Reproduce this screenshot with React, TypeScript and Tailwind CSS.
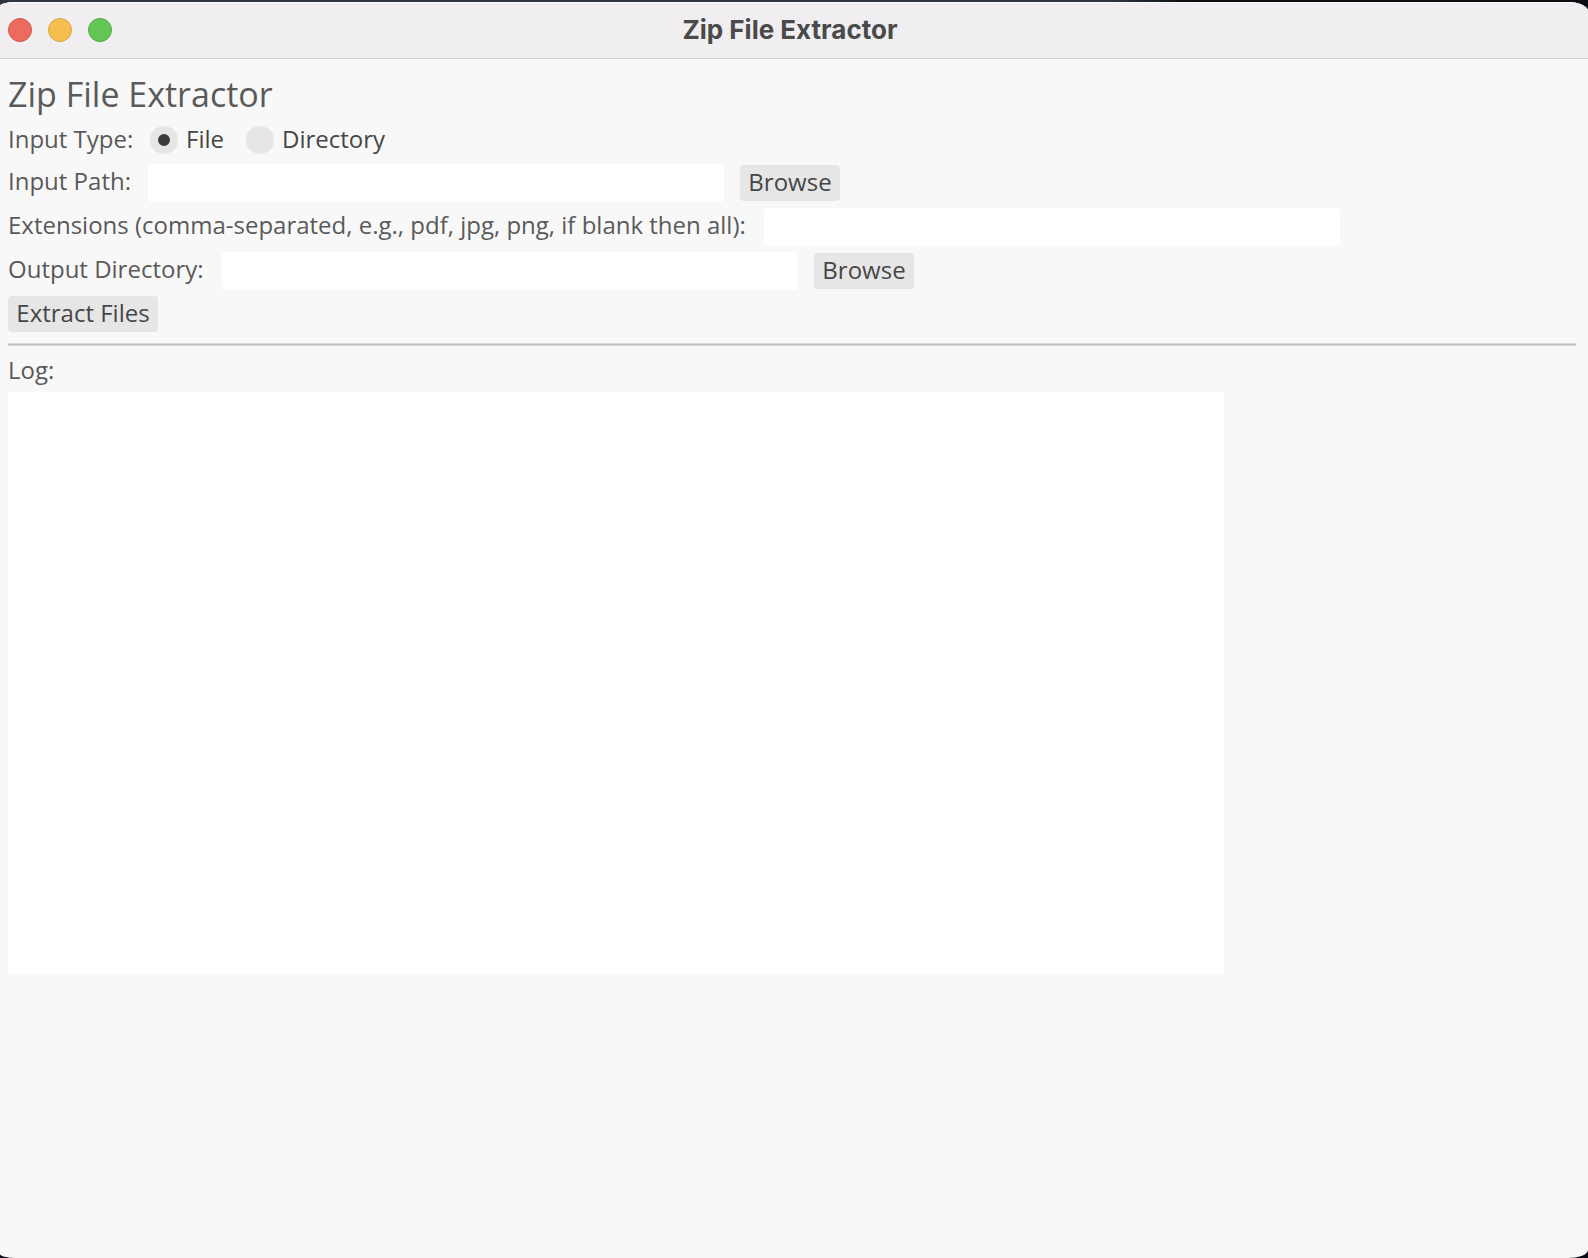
import { useState, type ReactNode } from "react";

const field =
  "h-[38px] w-[576px] shrink-0 rounded-[4px] bg-white px-2 text-[#3c3c3c] outline-none focus:ring-2 focus:ring-[#90d1ff]";
const labelText = "flex h-9 shrink-0 items-center self-start whitespace-nowrap pb-0.5 text-[#5a5a5a]";

function Button({ children, width }: { children: ReactNode; width: string }) {
  return (
    <button
      type="button"
      className={`h-9 shrink-0 whitespace-nowrap rounded-[4px] bg-[#e6e6e6] pb-0.5 text-center text-[#464646] hover:bg-[#dcdcdc] ${width}`}
    >
      {children}
    </button>
  );
}

function Radio({
  label,
  checked,
  onSelect,
}: {
  label: string;
  checked: boolean;
  onSelect: () => void;
}) {
  return (
    <label className="flex h-9 items-center gap-2 whitespace-nowrap text-[#464646]">
      <input
        type="radio"
        name="input-type"
        checked={checked}
        onChange={onSelect}
        className="size-7 appearance-none rounded-full border-8 border-[#e6e6e6] bg-[#e6e6e6] checked:bg-[#3c3c3c]"
      />
      <span className="pb-0.5">{label}</span>
    </label>
  );
}

export default function App() {
  const [kind, setKind] = useState("file");

  return (
    <div className="flex min-h-screen flex-col bg-[#0b0d14] bg-linear-to-r from-[#30363f] from-70% to-[#0b0d14] to-75% bg-[length:100%_16px] bg-no-repeat pt-0.5">
      <div className="flex grow flex-col overflow-hidden rounded-tl-[16px_4px] rounded-tr-[20px_9px] rounded-br-[20px_8px] rounded-bl-[16px_4px] bg-[#f8f8f8]">
        <header className="grid h-[57px] shrink-0 grid-cols-[1fr_auto_1fr] items-center border-b border-[#d0ced0] border-t border-t-white bg-[#f0eef0] pr-4 pb-0.5 pl-2">
          <div className="flex gap-4">
            <button type="button" aria-label="Close" className="size-6 rounded-full border border-[#d5564b] bg-[#ec6a5e]" />
            <button type="button" aria-label="Minimize" className="size-6 rounded-full border border-[#d9a441] bg-[#f5bf4f]" />
            <button type="button" aria-label="Zoom" className="size-6 rounded-full border border-[#52a842] bg-[#62c655]" />
          </div>
          <div className="font-[Inter,sans-serif] text-[26px] leading-[30px] font-bold text-[#4a4a4a]">Zip File Extractor</div>
          <div />
        </header>

        <main className="flex flex-col items-start gap-1.5 px-2 pt-[17px] font-['Open_Sans','Noto_Sans',sans-serif] text-[24px] leading-[30px] font-normal">
          <h1 className="h-10 text-[34px] leading-9 font-normal text-[#5a5a5a]">Zip File Extractor</h1>

          <div role="radiogroup" aria-labelledby="kind-label" className="flex items-center">
            <span id="kind-label" className={`${labelText} w-[142px]`}>
              Input Type:
            </span>
            <div className="flex gap-[22px]">
              <Radio label="File" checked={kind === "file"} onSelect={() => setKind("file")} />
              <Radio label="Directory" checked={kind === "directory"} onSelect={() => setKind("directory")} />
            </div>
          </div>

          <div className="flex items-center">
            <label htmlFor="input-path" className={`${labelText} w-[140px]`}>
              Input Path:
            </label>
            <input id="input-path" type="text" className={`${field} mr-4`} />
            <Button width="w-[100px]">Browse</Button>
          </div>

          <div className="flex items-center">
            <label htmlFor="extensions" className={`${labelText} w-[756px]`}>
              Extensions (comma-separated, e.g., pdf, jpg, png, if blank then all):
            </label>
            <input id="extensions" type="text" className={field} />
          </div>

          <div className="flex items-center">
            <label htmlFor="output-directory" className={`${labelText} w-[214px]`}>
              Output Directory:
            </label>
            <input id="output-directory" type="text" className={`${field} mr-4`} />
            <Button width="w-[100px]">Browse</Button>
          </div>

          <Button width="w-[150px]">Extract Files</Button>

          <div className="flex h-3 w-full items-center pr-1">
            <hr className="h-[3px] w-full border-y border-[#dadada] bg-[#bebebe]" />
          </div>

          <label htmlFor="log" className="h-[30px] leading-7 text-[#5a5a5a]">
            Log:
          </label>
          <textarea
            id="log"
            className="h-[582px] w-[1216px] max-w-full resize-none rounded-[4px] bg-white px-2 py-1 text-[#3c3c3c] outline-none"
          />
        </main>
      </div>
    </div>
  );
}
